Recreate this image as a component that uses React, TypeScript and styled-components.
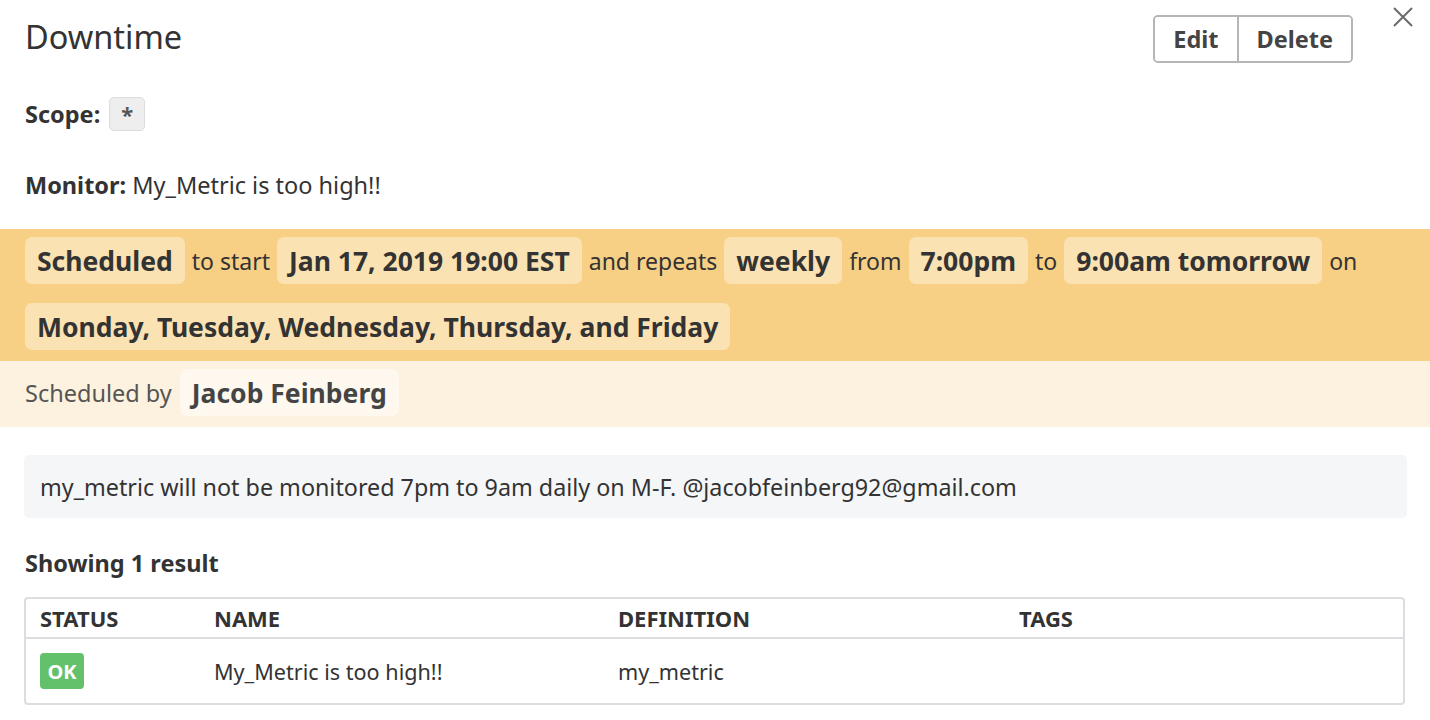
import React, { FC } from 'react';
import styled, { createGlobalStyle } from 'styled-components';

const GlobalStyle = createGlobalStyle`
  html, body {
    margin: 0;
    padding: 0;
    background: #fff;
  }
  body {
    font-family: "Noto Sans", "Open Sans", sans-serif;
    color: #333;
  }
`;

const Page = styled.div`
  width: 1430px;
  height: 720px;
  overflow: hidden;
  position: relative;
`;

const Header = styled.div`
  display: flex;
  align-items: flex-start;
  justify-content: space-between;
  padding: 15px 77px 0 25px;
  height: 97px;
  box-sizing: border-box;
`;

const Title = styled.h1`
  margin: 2px 0 0;
  font-size: 32.5px;
  font-weight: 400;
  line-height: 40px;
  color: #333;
`;

const ButtonGroup = styled.div`
  display: flex;
  border: 2px solid #b5b5b5;
  border-radius: 5px;
  height: 48px;
  box-sizing: border-box;
  overflow: hidden;
`;

const GroupButton = styled.button<{ $first?: boolean }>`
  font-family: inherit;
  font-size: 23.5px;
  font-weight: 700;
  color: #444;
  background: #fff;
  border: none;
  border-left: ${(p) => (p.$first ? 'none' : '2px solid #b5b5b5')};
  padding: 0 18px;
  cursor: pointer;
`;

const Close = styled.button`
  position: absolute;
  top: 6px;
  right: 16px;
  width: 22px;
  height: 22px;
  padding: 0;
  border: none;
  background: none;
  cursor: pointer;
`;

const Field = styled.div<{ $top?: number; $gap?: number }>`
  display: flex;
  align-items: center;
  gap: ${(p) => p.$gap ?? 9}px;
  padding: 0 25px;
  margin-top: ${(p) => p.$top ?? 0}px;
  font-size: 23.5px;
  height: 34px;
`;

const Label = styled.span`
  font-weight: 700;
`;

const ScopeTag = styled.span`
  display: inline-flex;
  align-items: center;
  justify-content: center;
  width: 36px;
  height: 34px;
  box-sizing: border-box;
  background: #eeeeee;
  border: 1px solid #dcdcdc;
  border-radius: 5px;
  font-weight: 700;
  color: #555;
  font-size: 22px;
`;

const Schedule = styled.div`
  margin-top: 27px;
  background: #f7d086;
  padding: 8px 25px 11px;
  display: flex;
  flex-wrap: wrap;
  align-items: center;
  row-gap: 19px;
  column-gap: 7px;
  font-size: 23px;
`;

const Chip = styled.span<{ $tone?: 'warm' | 'pale' }>`
  display: inline-flex;
  align-items: center;
  height: 47px;
  padding: 0 12px;
  border-radius: 7px;
  background: ${(p) => (p.$tone === 'pale' ? '#fef8ee' : '#fbe2b3')};
  font-size: 26.5px;
  font-weight: 700;
  color: #333;
`;

const Byline = styled.div`
  background: #fdf1df;
  padding: 8px 25px 11px;
  height: 66px;
  box-sizing: border-box;
  display: flex;
  align-items: center;
  gap: 8px;
  font-size: 23.5px;
  color: #555;

  ${Chip} {
    color: #444;
  }
`;

const Message = styled.div`
  margin: 28px 23px 0 24px;
  background: #f5f6f8;
  border-radius: 5px;
  padding: 0 16px;
  height: 63px;
  display: flex;
  align-items: center;
  font-size: 23.3px;
  color: #333;
`;

const ResultCount = styled.div`
  margin: 29px 25px 0;
  font-size: 23.5px;
  font-weight: 700;
  color: #333;
`;

const Table = styled.div`
  margin: 18px 25px 0 24px;
  border: 2px solid #dcdde1;
  border-radius: 4px;
`;

const Row = styled.div<{ $head?: boolean }>`
  display: grid;
  grid-template-columns: 174px 404px 401px 1fr;
  align-items: center;
  padding: 0 14px;
  height: ${(p) => (p.$head ? '38px' : '64px')};
  border-bottom: ${(p) => (p.$head ? '2px solid #dcdde1' : 'none')};
  font-size: ${(p) => (p.$head ? '22px' : '21.6px')};
  font-weight: ${(p) => (p.$head ? 700 : 400)};
  color: #333;
`;

const StatusBadge = styled.span`
  display: inline-flex;
  align-items: center;
  justify-content: center;
  width: 44px;
  height: 36px;
  border-radius: 4px;
  background: #63c06b;
  color: #fff;
  font-weight: 700;
  font-size: 20px;
`;

const CloseIcon: FC = () => (
  <svg width="22" height="22" viewBox="0 0 22 22" fill="none" stroke="#6b6b6b" strokeWidth="2">
    <path d="M2 2 L20 20 M20 2 L2 20" />
  </svg>
);

const App: FC = () => {
  return (
    <Page>
      <GlobalStyle />
      <Header>
        <Title>Downtime</Title>
        <ButtonGroup>
          <GroupButton $first>Edit</GroupButton>
          <GroupButton>Delete</GroupButton>
        </ButtonGroup>
      </Header>
      <Close aria-label="Close">
        <CloseIcon />
      </Close>

      <Field>
        <Label>Scope:</Label>
        <ScopeTag>*</ScopeTag>
      </Field>
      <Field $top={37} $gap={6}>
        <Label>Monitor:</Label>
        <span>My_Metric is too high!!</span>
      </Field>

      <Schedule>
        <Chip>Scheduled</Chip>
        <span>to start</span>
        <Chip>Jan 17, 2019 19:00 EST</Chip>
        <span>and repeats</span>
        <Chip>weekly</Chip>
        <span>from</span>
        <Chip>7:00pm</Chip>
        <span>to</span>
        <Chip>9:00am tomorrow</Chip>
        <span>on</span>
        <Chip>Monday, Tuesday, Wednesday, Thursday, and Friday</Chip>
      </Schedule>
      <Byline>
        <span>Scheduled by</span>
        <Chip $tone="pale">Jacob Feinberg</Chip>
      </Byline>

      <Message>my_metric will not be monitored 7pm to 9am daily on M-F. @jacobfeinberg92@gmail.com</Message>

      <ResultCount>Showing 1 result</ResultCount>

      <Table>
        <Row $head>
          <span>STATUS</span>
          <span>NAME</span>
          <span>DEFINITION</span>
          <span>TAGS</span>
        </Row>
        <Row>
          <span>
            <StatusBadge>OK</StatusBadge>
          </span>
          <span>My_Metric is too high!!</span>
          <span>my_metric</span>
          <span />
        </Row>
      </Table>
    </Page>
  );
};

export default App;
